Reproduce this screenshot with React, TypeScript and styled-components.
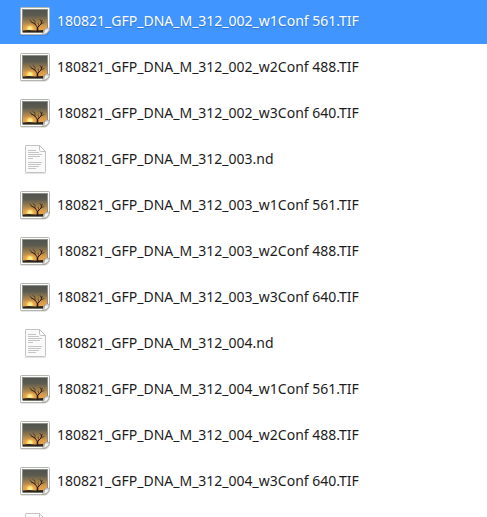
import React, { useState } from "react";
import styled, { createGlobalStyle } from "styled-components";

const GlobalStyle = createGlobalStyle`
  body {
    margin: 0;
    background: #ffffff;
  }
`;

const Viewport = styled.main`
  height: 100vh;
  overflow: hidden;
  background: #ffffff;
  font-family: "Noto Sans", "Open Sans", sans-serif;
`;

const FileList = styled.ul`
  list-style: none;
  margin: -2px 0 0;
  padding: 0;
`;

const FileRow = styled.li<{ $selected: boolean }>`
  display: flex;
  align-items: center;
  gap: 6px;
  height: 46px;
  padding-left: 19px;
  color: ${(p) => (p.$selected ? "#ffffff" : "#1c1c1c")};
  background: ${(p) => (p.$selected ? "#4095ff" : "#ffffff")};
  text-shadow: ${(p) => (p.$selected ? "0 1px 1px #2f74cc" : "none")};
  cursor: default;
`;

const IconSlot = styled.span`
  display: flex;
  flex: none;
  justify-content: center;
  width: 32px;
`;

const FileName = styled.span`
  font-size: 14px;
  line-height: 20px;
  white-space: nowrap;
`;

function ImageIcon({ id }: { id: string }) {
  const sky = `sky-${id}`;
  const sun = `sun-${id}`;
  return (
    <svg width="32" height="32" viewBox="0 0 32 32" aria-hidden="true">
      <defs>
        <linearGradient id={sky} x1="0" y1="0" x2="0" y2="1">
          <stop offset="0" stopColor="#50544f" />
          <stop offset="0.25" stopColor="#5c5b50" />
          <stop offset="0.5" stopColor="#967a4e" />
          <stop offset="0.75" stopColor="#d99c4a" />
          <stop offset="1" stopColor="#f2a545" />
        </linearGradient>
        <radialGradient id={sun}>
          <stop offset="0" stopColor="#fff6a8" />
          <stop offset="0.4" stopColor="#ffe27a" />
          <stop offset="0.6" stopColor="#ffbf55" stopOpacity="0.5" />
          <stop offset="1" stopColor="#ffb53e" stopOpacity="0" />
        </radialGradient>
      </defs>
      <path d="M1 29h24c3 0 6-2 6-5v1c0 3-3 5.500-6 5.500H3c-1 0-2-.5-2-1.500z" fill="#000" opacity="0.2" />
      <path d="M2.500 2.500h27a1 1 0 0 1 1 1v20c0 3-3 6-6 6h-22a1 1 0 0 1-1-1v-25a1 1 0 0 1 1-1z" fill="#fcfcfb" stroke="#b4b6b0" />
      <path d="M3 4h26v19c-3 .2-4.500 1.500-4.500 4.500H3z" fill="#8b8d86" />
      <path d="M4 5h24v18c-2.500.2-4 1.500-4 4H4z" fill={`url(#${sky})`} />
      <ellipse cx="11" cy="23.500" rx="6" ry="5" fill={`url(#${sun})`} />
      <path d="M4 25.500l6-.5 6 .5 8-.5v2.500H4z" fill="#2b261e" />
      <g fill="none" stroke="#2b1d12" strokeLinecap="round" strokeLinejoin="round">
        <path d="M18.500 26.500V22.500" strokeWidth="1.600" />
        <path d="M18.500 22.500l-2.500-3.500-3.500-2M18.500 22.500l3.500-3.500 1-3.500" strokeWidth="1" />
        <path d="M16 19v-3l-2-1.500M12.500 17l-1.500-2M22 19l3-1.500M22.500 17l-1.500-2.500M20 21l-1-3" strokeWidth="0.600" />
      </g>
      <path d="M30.500 22.500c-1 1.500-3 1.500-5 1.500.2 2-.5 4.500-2.500 5.500 4.500 0 7.500-3 7.500-7z" fill="#f3f3f1" stroke="#a0a29b" />
    </svg>
  );
}

function DocumentIcon() {
  return (
    <svg width="32" height="32" viewBox="0 0 32 32" aria-hidden="true">
      <path d="M6 30.500h21" stroke="#000" opacity="0.1" />
      <path d="M6.500 2.500h14l6 6v20a1 1 0 0 1-1 1h-18a1 1 0 0 1-1-1v-25a1 1 0 0 1 1-1z" fill="#fafafa" stroke="#c4c5c2" />
      <path d="M20.500 2.500v4c0 1.500.5 2 2 2h4z" fill="#ffffff" stroke="#bfc0bd" />
      <path d="M9 7.500h8M9 9.500h11M9 11.500h14M9 13.500h12M9 15.500h5M9 19.500h14M9 21.500h13M9 23.500h11M9 25.500h8" stroke="#c5c5c5" />
    </svg>
  );
}

type FileEntry = { kind: "image" | "document"; name?: string };

const files: FileEntry[] = [
  { kind: "image", name: "180821_GFP_DNA_M_312_002_w1Conf 561.TIF" },
  { kind: "image", name: "180821_GFP_DNA_M_312_002_w2Conf 488.TIF" },
  { kind: "image", name: "180821_GFP_DNA_M_312_002_w3Conf 640.TIF" },
  { kind: "document", name: "180821_GFP_DNA_M_312_003.nd" },
  { kind: "image", name: "180821_GFP_DNA_M_312_003_w1Conf 561.TIF" },
  { kind: "image", name: "180821_GFP_DNA_M_312_003_w2Conf 488.TIF" },
  { kind: "image", name: "180821_GFP_DNA_M_312_003_w3Conf 640.TIF" },
  { kind: "document", name: "180821_GFP_DNA_M_312_004.nd" },
  { kind: "image", name: "180821_GFP_DNA_M_312_004_w1Conf 561.TIF" },
  { kind: "image", name: "180821_GFP_DNA_M_312_004_w2Conf 488.TIF" },
  { kind: "image", name: "180821_GFP_DNA_M_312_004_w3Conf 640.TIF" },
  { kind: "document" },
];

export default function App() {
  const [selected, setSelected] = useState(0);
  return (
    <>
      <GlobalStyle />
      <Viewport>
        <FileList role="listbox" aria-label="Files">
          {files.map(({ kind, name }, i) => (
            <FileRow
              key={i}
              role="option"
              aria-selected={i === selected}
              $selected={i === selected}
              onClick={() => setSelected(i)}
            >
              <IconSlot>{kind === "image" ? <ImageIcon id={String(i)} /> : <DocumentIcon />}</IconSlot>
              {name && <FileName>{name}</FileName>}
            </FileRow>
          ))}
        </FileList>
      </Viewport>
    </>
  );
}
